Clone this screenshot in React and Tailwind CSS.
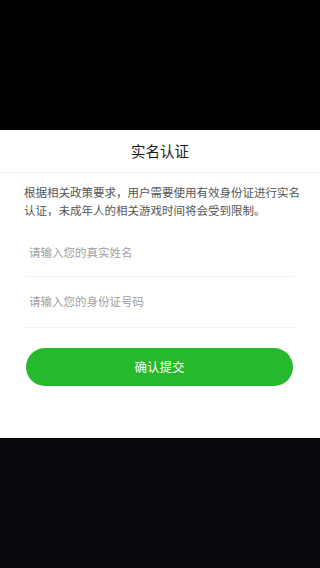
// Real-name verification modal over a dark page.

const font = { fontFamily: '"Noto Sans CJK SC", "Noto Sans", sans-serif' }

function Field({ placeholder, className }) {
  return (
    <div className={`flex items-center border-b border-[#f2f2f2] ${className}`}>
      <input
        type="text"
        placeholder={placeholder}
        className="w-full bg-transparent pl-[3px] text-[11.5px] text-[#333] outline-none placeholder:text-[#a0a0a0]"
      />
    </div>
  )
}

export default function App() {
  return (
    <div className="flex h-[568px] flex-col bg-black" style={font}>
      <div className="h-[130px] bg-black" />

      <div className="bg-white pb-[52px]">
        <div className="flex h-[43px] items-center justify-center border-b border-[#f0f0f0] text-[14.5px] text-[#1a1a1a]">
          实名认证
        </div>

        <p className="pl-6 pr-4 pt-[10px] text-[11.5px] leading-[18px] text-[#555]">
          根据相关政策要求，用户需要使用有效身份证进行实名认证，未成年人的相关游戏时间将会受到限制。
        </p>

        <div className="mx-[26px] mt-[10px]">
          <Field placeholder="请输入您的真实姓名" className="h-[48px]" />
          <Field placeholder="请输入您的身份证号码" className="h-[51px]" />
        </div>

        <button
          type="button"
          className="mx-[26px] mt-[20px] flex h-[38px] w-[267px] items-center justify-center rounded-full bg-[#27b92d] text-[12.5px] text-white"
        >
          确认提交
        </button>
      </div>

      <div className="flex-1 bg-[#07080c]" />
    </div>
  )
}
